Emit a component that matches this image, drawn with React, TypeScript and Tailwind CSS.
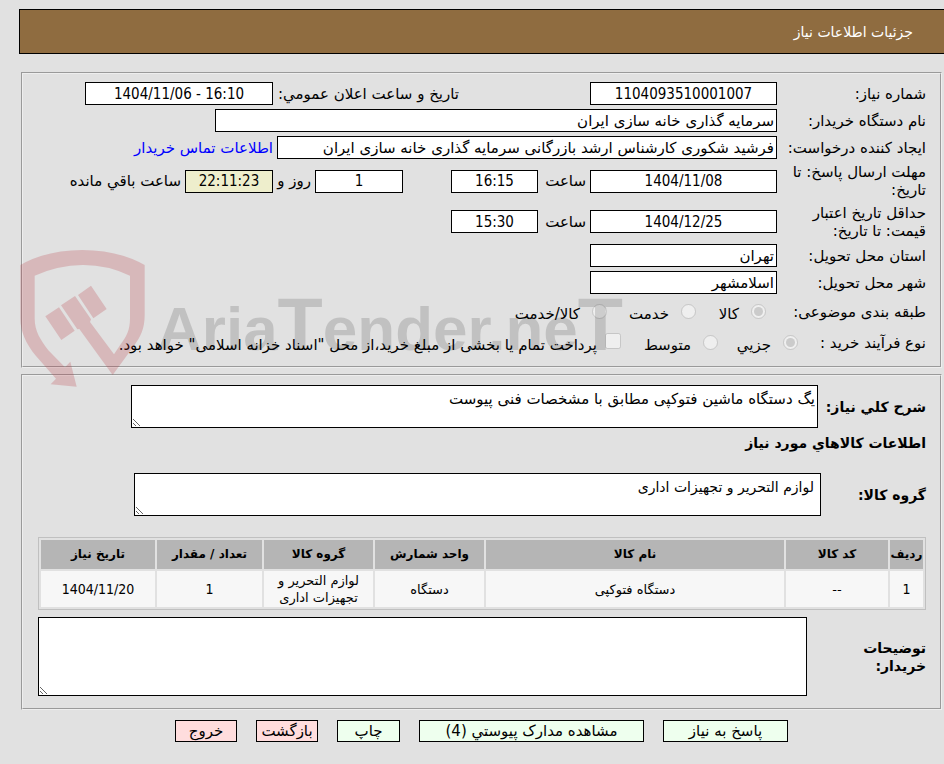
import type { ReactNode } from 'react';
import clsx from 'clsx';

type FieldProps = {
  id: string;
  value: string;
  label?: string;
  className?: string;
};

const Field = ({ id, value, label, className }: FieldProps) => (
  <input
    id={id}
    type="text"
    readOnly
    aria-label={label}
    defaultValue={value}
    className={clsx('h-[23px] shrink-0 border border-black px-0.5 text-black outline-none', className)}
  />
);

type RowProps = {
  label: ReactNode;
  htmlFor?: string;
  className?: string;
  children: ReactNode;
};

const Row = ({ label, htmlFor, className, children }: RowProps) => (
  <div className={clsx('flex items-center', className)}>
    <label htmlFor={htmlFor} className="w-[149px] shrink-0">{label}</label>
    {children}
  </div>
);

type OptionProps = {
  id: string;
  name: string;
  label: string;
  checked?: boolean;
  className?: string;
};

const Option = ({ id, name, label, checked, className }: OptionProps) => (
  <div className={clsx('flex shrink-0 items-center gap-3', className)}>
    <input id={id} type="radio" name={name} defaultChecked={checked} disabled className="mb-0.5 size-[15px]" />
    <label htmlFor={id} className="pt-1 whitespace-nowrap">{label}</label>
  </div>
);

const columns = [
  { title: 'ردیف', width: 'w-[33px]', value: '1' },
  { title: 'کد کالا', width: 'w-[102px]', value: '--' },
  { title: 'نام کالا', width: 'w-auto', value: 'دستگاه فتوکپی' },
  { title: 'واحد شمارش', width: 'w-[109px]', value: 'دستگاه' },
  { title: 'گروه کالا', width: 'w-[109px]', value: 'لوازم التحریر و تجهیزات اداری' },
  { title: 'تعداد / مقدار', width: 'w-[105px]', value: '1' },
  { title: 'تاریخ نیاز', width: 'w-[114px]', value: '1404/11/20' },
];

const buttons = [
  { title: 'پاسخ به نیاز', className: 'w-[125px] bg-[#eeffee]' },
  { title: 'مشاهده مدارک پیوستي (4)', className: 'w-[225px] bg-[#eeffee]' },
  { title: 'چاپ', className: 'w-[63px] bg-[#eeffee]' },
  { title: 'بازگشت', className: 'w-[62px] bg-[#ffdddd]' },
  { title: 'خروج', className: 'w-[62px] bg-[#ffdddd]' },
];

const Watermark = () => (
  <div dir="ltr" aria-hidden="true" className="pointer-events-none absolute top-[249px] left-5 flex">
    <svg width="125" height="139" viewBox="30 27 375 417" fill="#b83a44" opacity="0.24">
      <path d="M31 75Q110 30 217 30T404 75V225C404 265 392 290 372 317L308 405L208 267L202 268L153 196L195 168L243 238L240 246L312 343L330 316C350 290 360 270 360 235V107Q290 74 217 75T74 107V235C74 275 92 300 115 331L165 382L181 365L200 440L122 433L138 416L78 348C48 312 31 275 31 235Z" />
      <path d="M106 229L147 202L194 272L154 300ZM204 165L243 137L290 207L250 235Z" />
    </svg>
    <span className="ml-3 pt-7 font-['Liberation_Sans',sans-serif] text-[62px] leading-[96px] font-bold text-black/14">
      Aria<span className="text-[74px]">T</span>ender.ne<span className="text-[74px]">T</span>
    </span>
  </div>
);

const panel = 'mr-0.5 ml-[21px] border-2 border-[#eeeeee] [border-style:groove] pr-3.5 pl-[15px]';
const area = 'block border border-black bg-white text-black outline-none';
const numeric = "text-center font-['DejaVu_Sans_Condensed','DejaVu_Sans',sans-serif]";

const App = () => (
  <main
    dir="rtl"
    lang="fa"
    className="relative min-h-screen overflow-hidden bg-[#e1e1e1] pt-[9px] pb-5 font-['DejaVu_Sans',sans-serif] text-[15px] leading-[18px] text-black"
  >
    <header className="ml-[19px] flex h-[45px] items-center border-y border-l border-black bg-[#8f6c40] pr-[31px] text-[14px] text-white">
      <h1>جزئیات اطلاعات نیاز</h1>
    </header>

    <section className={clsx(panel, 'mt-[18px] h-[296px] pt-1.5')}>
      <Row label="شماره نیاز:" htmlFor="number" className="h-[27px]">
        <Field id="number" value="1104093510001007" className={clsx(numeric, 'w-[187px] bg-white')} />
        <label htmlFor="announced" className="mr-[131px] w-[186px] shrink-0 whitespace-nowrap">تاریخ و ساعت اعلان عمومي:</label>
        <Field id="announced" value="1404/11/06 - 16:10" className={clsx(numeric, 'w-[188px] bg-white [direction:ltr]')} />
      </Row>
      <Row label="نام دستگاه خریدار:" htmlFor="buyer" className="h-[27px]">
        <Field id="buyer" value="سرمایه گذاری خانه سازی ایران" className="w-[562px] bg-white" />
      </Row>
      <Row label="ایجاد کننده درخواست:" htmlFor="creator" className="h-[27px]">
        <Field
          id="creator"
          value="فرشید شکوری کارشناس ارشد بازرگانی سرمایه گذاری خانه سازی ایران"
          className="w-[500px] bg-white"
        />
        <a href="#contact" className="mr-1 text-[#0000ff]">اطلاعات تماس خریدار</a>
      </Row>
      <Row label={<>مهلت ارسال پاسخ: تا<br />تاریخ:</>} htmlFor="deadline" className="h-10">
        <Field id="deadline" value="1404/11/08" className={clsx(numeric, 'w-[187px] bg-white')} />
        <label htmlFor="deadline-time" className="mr-1 w-12">ساعت</label>
        <Field id="deadline-time" value="16:15" className={clsx(numeric, 'w-[87px] bg-white')} />
        <Field id="days" label="روز" value="1" className={clsx(numeric, 'mr-12 w-[88px] bg-white')} />
        <span className="mr-1 w-[38px] whitespace-nowrap">روز و</span>
        <Field id="remaining" label="ساعت باقي مانده" value="22:11:23" className={clsx(numeric, 'w-[88px] bg-[#eeeecc]')} />
        <span className="mr-1 whitespace-nowrap">ساعت باقي مانده</span>
      </Row>
      <Row label={<>حداقل تاریخ اعتبار<br />قیمت: تا تاریخ:</>} htmlFor="validity" className="h-[41px]">
        <Field id="validity" value="1404/12/25" className={clsx(numeric, 'w-[187px] bg-white')} />
        <label htmlFor="validity-time" className="mr-1 w-12">ساعت</label>
        <Field id="validity-time" value="15:30" className={clsx(numeric, 'w-[87px] bg-white')} />
      </Row>
      <Row label="استان محل تحویل:" htmlFor="province" className="h-[27px]">
        <Field id="province" value="تهران" className="w-[187px] bg-white" />
      </Row>
      <Row label="شهر محل تحویل:" htmlFor="city" className="h-[27px]">
        <Field id="city" value="اسلامشهر" className="w-[187px] bg-white" />
      </Row>
      <div role="radiogroup" aria-labelledby="subject" className="flex h-8 items-center">
        <span id="subject" className="w-40 shrink-0">طبقه بندی موضوعی:</span>
        <Option id="goods" name="subject" label="کالا" checked className="w-[70px]" />
        <Option id="service" name="subject" label="خدمت" className="w-[89px]" />
        <Option id="both" name="subject" label="کالا/خدمت" />
      </div>
      <div role="radiogroup" aria-labelledby="process" className="flex h-[30px] items-center">
        <span id="process" className="w-32 shrink-0">نوع فرآیند خرید :</span>
        <Option id="minor" name="process" label="جزیي" checked className="w-20" />
        <Option id="medium" name="process" label="متوسط" className="w-[97px]" />
        <input id="treasury" type="checkbox" disabled className="mb-1 size-4 shrink-0" />
        <label htmlFor="treasury" className="mr-2 pt-1 whitespace-nowrap">
          پرداخت تمام یا بخشی از مبلغ خرید،از محل "اسناد خزانه اسلامی" خواهد بود.
        </label>
      </div>
    </section>

    <section className={clsx(panel, 'mt-1.5 pt-[9px] pb-3')}>
      <div className="flex items-center">
        <label htmlFor="description" className="w-[108px] shrink-0 text-[14px] font-bold">شرح کلي نیاز:</label>
        <textarea
          id="description"
          readOnly
          defaultValue="یگ دستگاه ماشین فتوکپی مطابق با مشخصات فنی پیوست"
          className={clsx(area, 'ml-[93px] h-[43px] min-w-0 flex-1 px-0.5 pt-1')}
        />
      </div>
      <h2 className="mt-1.5 text-[14px] font-bold">اطلاعات کالاهاي مورد نیاز</h2>
      <div className="mt-[21px] flex items-center">
        <label htmlFor="group" className="w-[105px] shrink-0 text-[14px] font-bold">گروه کالا:</label>
        <textarea
          id="group"
          readOnly
          defaultValue="لوازم التحریر و تجهیزات اداری"
          className={clsx(area, 'ml-24 h-[43px] min-w-0 flex-1 px-1.5 pt-1 text-[14px]')}
        />
      </div>

      <table className="mt-[21px] w-full table-fixed border-separate border-spacing-0.5 border border-[#c0c0c0] text-center leading-[17px]">
        <thead>
          <tr className="h-[29px] bg-[#b5b5b5]">
            {columns.map((col) => (
              <th key={col.title} className={clsx('p-0 text-[12px] font-bold whitespace-nowrap', col.width)}>{col.title}</th>
            ))}
          </tr>
        </thead>
        <tbody>
          <tr className="h-9 bg-[#f7f7f7]">
            {columns.map((col) => (
              <td
                key={col.title}
                className={clsx('px-2 py-0', /^[\d/]+$/.test(col.value) ? [numeric, 'text-[14px]'] : 'text-[13px]')}
              >
                {col.value}
              </td>
            ))}
          </tr>
        </tbody>
      </table>

      <div className="mt-[7px] flex items-center">
        <label htmlFor="notes" className="w-[119px] shrink-0 text-[14px] font-bold">
          توضیحات
          <br />
          خریدار:
        </label>
        <textarea id="notes" readOnly className={clsx(area, 'h-[79px] min-w-0 flex-1')} />
      </div>
    </section>

    <div className="mt-2.5 mr-0.5 ml-[21px] flex justify-center gap-[19px]">
      {buttons.map((button) => (
        <button key={button.title} type="button" className={clsx('h-[22px] border border-black leading-5 whitespace-nowrap', button.className)}>
          {button.title}
        </button>
      ))}
    </div>

    <Watermark />
  </main>
);

export default App;
